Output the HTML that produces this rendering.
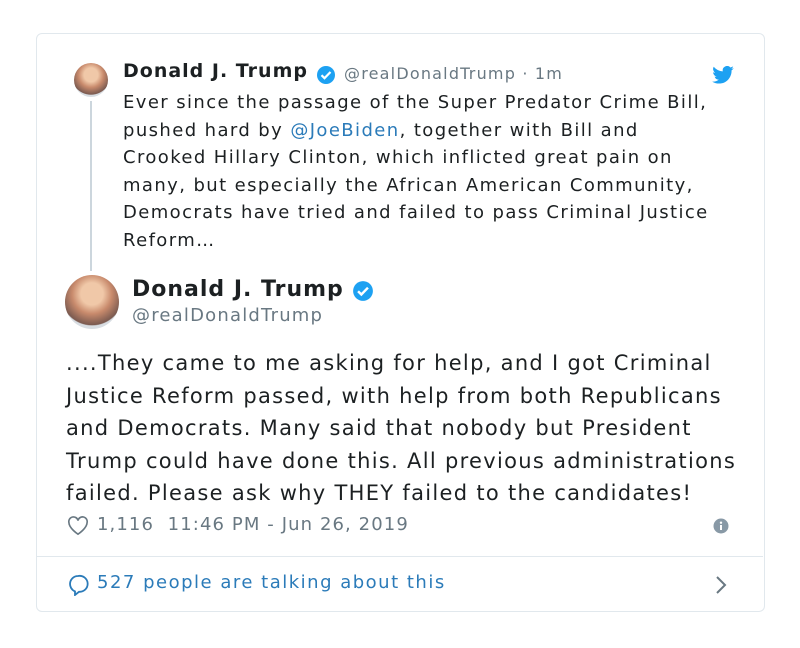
<!DOCTYPE html>
<html><head><style>
body{margin:0;width:800px;height:648px;background:#fff;font-family:"DejaVu Sans","Liberation Sans",sans-serif;color:#1c2022;position:relative;overflow:hidden}
.card{position:absolute;left:36px;top:33px;width:727px;height:577px;border:1px solid #e1e8ed;border-radius:6px}
.abs{position:absolute;white-space:nowrap}
.av{position:absolute;border-radius:50%;background:radial-gradient(circle at 50% 35%,#f0c8a8 0 25%,#c88a6c 45%,#7a5a50 70%,#d8dde2 72%)}
.q{font-size:18px;line-height:27.6px;letter-spacing:1.4px}
.m{font-size:21px;line-height:32.6px;letter-spacing:1.3px}
a{color:#2b7bb9;text-decoration:none}
</style></head><body>
<div class="card"></div>
<div class="av" style="left:74px;top:63px;width:34px;height:34px"></div>
<div class="abs" style="left:90px;top:101px;width:2px;height:170px;background:#ccd6dd"></div>
<div class="abs" style="left:123px;top:60px;font-size:19px;font-weight:bold;letter-spacing:1px">Donald J. Trump</div>
<svg class="abs" style="left:316px;top:65px" width="20" height="20" viewBox="0 0 20 20"><circle cx="10" cy="10" r="9" fill="#1da1f2"/><path d="M5.5 10.2l3 3 6-6.2" stroke="#fff" stroke-width="2.2" fill="none"/></svg>
<div class="abs" style="left:344px;top:64px;font-size:16px;color:#697882;letter-spacing:1.2px">@realDonaldTrump · 1m</div>
<svg class="abs" style="left:712px;top:66px" width="22" height="18" viewBox="0 0 24 20"><path d="M24 2.4a9.8 9.8 0 0 1-2.8.8A4.9 4.9 0 0 0 23.3.4a9.9 9.9 0 0 1-3.1 1.2A4.9 4.9 0 0 0 11.800 6 14 14 0 0 1 1.7.9a4.9 4.9 0 0 0 1.5 6.6A4.9 4.9 0 0 1 1 6.9a4.9 4.9 0 0 0 3.9 4.8 4.9 4.9 0 0 1-2.2.1 4.9 4.9 0 0 0 4.6 3.4A9.9 9.9 0 0 1 0 17.3 14 14 0 0 0 7.5 19.5c9.1 0 14-7.5 14-14v-.6A10 10 0 0 0 24 2.4z" fill="#1da1f2"/></svg>
<div class="abs q" style="left:123px;top:89px">Ever since the passage of the Super Predator Crime Bill,<br>pushed hard by <a>@JoeBiden</a>, together with Bill and<br>Crooked Hillary Clinton, which inflicted great pain on<br>many, but especially the African American Community,<br>Democrats have tried and failed to pass Criminal Justice<br>Reform…</div>
<div class="av" style="left:65px;top:275px;width:54px;height:54px"></div>
<div class="abs" style="left:132px;top:277px;font-size:22px;font-weight:bold;letter-spacing:1px">Donald J. Trump</div>
<svg class="abs" style="left:352px;top:280px" width="22" height="22" viewBox="0 0 20 20"><circle cx="10" cy="10" r="9" fill="#1da1f2"/><path d="M5.5 10.2l3 3 6-6.2" stroke="#fff" stroke-width="2.2" fill="none"/></svg>
<div class="abs" style="left:132px;top:305px;font-size:18px;color:#697882;letter-spacing:1.2px">@realDonaldTrump</div>
<div class="abs m" style="left:66px;top:347px">....They came to me asking for help, and I got Criminal<br>Justice Reform passed, with help from both Republicans<br>and Democrats. Many said that nobody but President<br>Trump could have done this. All previous administrations<br>failed. Please ask why THEY failed to the candidates!</div>
<svg class="abs" style="left:67px;top:516px" width="22" height="20" viewBox="0 0 24 22"><path d="M12 20S2 13.5 2 7.2A5 5 0 0 1 12 5a5 5 0 0 1 10 2.2C22 13.5 12 20 12 20z" fill="none" stroke="#697882" stroke-width="1.8"/></svg>
<div class="abs" style="left:97px;top:514px;font-size:18px;color:#697882;letter-spacing:1.1px">1,116&nbsp;&nbsp;11:46 PM - Jun 26, 2019</div>
<svg class="abs" style="left:713px;top:518px" width="16" height="16" viewBox="0 0 16 16"><circle cx="8" cy="8" r="7.5" fill="#8899a6"/><rect x="7" y="7" width="2" height="5" fill="#fff"/><circle cx="8" cy="4.7" r="1.2" fill="#fff"/></svg>
<div class="abs" style="left:37px;top:556px;width:726px;height:1px;background:#e1e8ed"></div>
<svg class="abs" style="left:67px;top:574px" width="22" height="22" viewBox="0 0 22 22"><path d="M11 2a8 8 0 0 0-3 15.4V21l4-3.2A8 8 0 1 0 11 2z" fill="none" stroke="#2b7bb9" stroke-width="1.8"/></svg>
<div class="abs" style="left:97px;top:572px;font-size:18px;color:#2b7bb9;letter-spacing:1.5px">527 people are talking about this</div>
<svg class="abs" style="left:715px;top:575px" width="12" height="20" viewBox="0 0 12 20"><path d="M2 2l8 8-8 8" fill="none" stroke="#697882" stroke-width="2"/></svg>
</body></html>
